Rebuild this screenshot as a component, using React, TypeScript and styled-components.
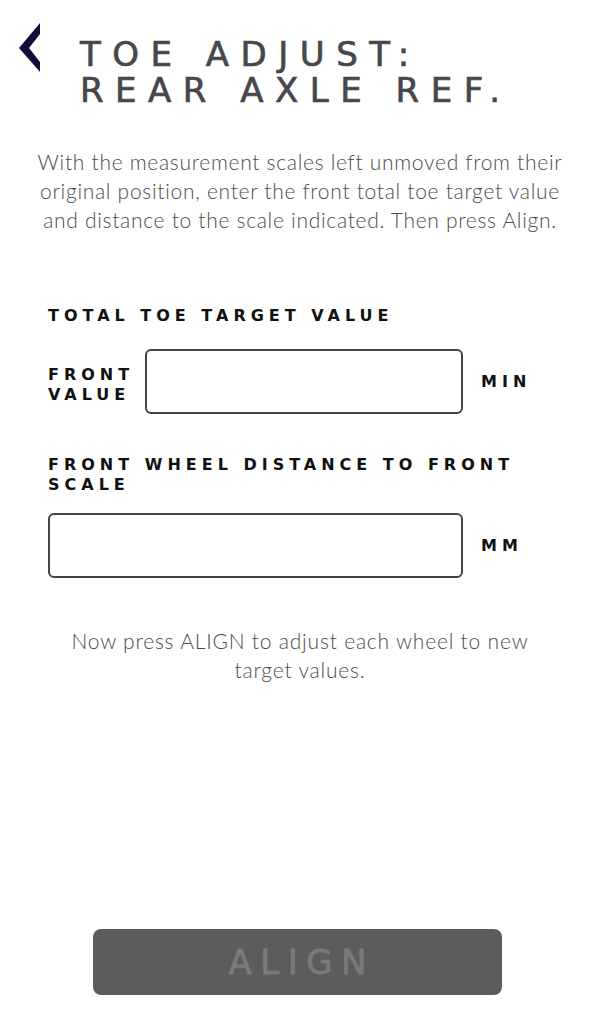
import React, { useState } from "react";
import styled, { createGlobalStyle } from "styled-components";

const GlobalStyle = createGlobalStyle`
    html, body {
        margin: 0;
        padding: 0;
        background: #ffffff;
    }
    * {
        box-sizing: border-box;
    }
`;

const App: React.FC = () => {
    const [toeValue, setToeValue] = useState("");
    const [distance, setDistance] = useState("");

    return (
        <Page>
            <GlobalStyle />
            <Header>
                <BackButton aria-label="Back">
                    <svg width="22" height="50" viewBox="0 0 22 50">
                        <polygon points="21,0 0,25 21,49 21,39 10,25 21,11" fill="#130c3c" />
                    </svg>
                </BackButton>
                <Title>
                    Toe adjust:
                    <br />
                    Rear axle ref.
                </Title>
            </Header>

            <Intro>
                With the measurement scales left unmoved from their original position, enter the front
                total toe target value and distance to the scale indicated. Then press Align.
            </Intro>

            <Form>
                <SectionLabel $gap={23}>Total toe target value</SectionLabel>
                <FieldRow>
                    <FieldLabel>
                        Front
                        <br />
                        value
                    </FieldLabel>
                    <Input
                        type="text"
                        value={toeValue}
                        onChange={(e: React.ChangeEvent<HTMLInputElement>) => setToeValue(e.target.value)}
                    />
                    <Unit>min</Unit>
                </FieldRow>

                <SectionLabel $top={41} $gap={18}>
                    Front wheel distance to front scale
                </SectionLabel>
                <FieldRow>
                    <Input
                        type="text"
                        value={distance}
                        onChange={(e: React.ChangeEvent<HTMLInputElement>) => setDistance(e.target.value)}
                    />
                    <Unit>mm</Unit>
                </FieldRow>
            </Form>

            <Note>Now press ALIGN to adjust each wheel to new target values.</Note>

            <AlignButton disabled>Align</AlignButton>
        </Page>
    );
};

const Page = styled.div`
    min-height: 100vh;
    display: flex;
    flex-direction: column;
    padding-bottom: 29px;
`;

const Header = styled.div`
    display: flex;
    align-items: flex-start;
    padding: 23px 0 0 19px;
`;

const BackButton = styled.button`
    border: none;
    background: none;
    padding: 0;
    width: 22px;
    height: 50px;
    cursor: pointer;
    svg {
        display: block;
    }
`;

const Title = styled.h1`
    margin: 13px 0 0 39px;
    font-family: "DejaVu Sans", sans-serif;
    font-weight: 400;
    font-size: 34px;
    line-height: 36px;
    letter-spacing: 11.5px;
    text-transform: uppercase;
    color: #46464b;
    -webkit-text-stroke: 0.7px #46464b;
`;

const Intro = styled.p`
    margin: 39px 0 0;
    padding: 0 30px;
    font-family: "Lato", sans-serif;
    font-weight: 300;
    font-size: 21px;
    line-height: 29px;
    letter-spacing: 0.7px;
    text-align: center;
    color: #4c4c4c;
`;

const Form = styled.div`
    margin-top: 72px;
    padding: 0 48px;
`;

const labelText = `
    font-family: "DejaVu Sans", sans-serif;
    font-weight: 700;
    font-size: 16px;
    line-height: 20px;
    letter-spacing: 5px;
    text-transform: uppercase;
    color: #111111;
`;

const SectionLabel = styled.div<{ $top?: number; $gap: number }>`
    ${labelText}
    margin-top: ${(p) => p.$top ?? 0}px;
    margin-bottom: ${(p) => p.$gap}px;
`;

const FieldRow = styled.div`
    display: flex;
    align-items: center;
`;

const FieldLabel = styled.div`
    ${labelText}
    width: 97px;
    margin-top: 7px;
`;

const Input = styled.input`
    flex: 1;
    min-width: 0;
    height: 65px;
    border: 2.5px solid #444448;
    border-radius: 6px;
    padding: 0 14px;
    font-family: "Lato", sans-serif;
    font-size: 20px;
    color: #333;
    outline: none;
`;

const Unit = styled.div`
    ${labelText}
    width: 89px;
    padding-left: 18px;
`;

const Note = styled.p`
    margin: 48px 0 0;
    padding: 0 60px;
    font-family: "Lato", sans-serif;
    font-weight: 300;
    font-size: 21px;
    line-height: 29px;
    letter-spacing: 0.8px;
    text-align: center;
    color: #4c4c4c;
`;

const AlignButton = styled.button`
    margin: auto 0 0 93px;
    width: 409px;
    height: 66px;
    border: none;
    border-radius: 8px;
    background: #5c5c5c;
    font-family: "DejaVu Sans", sans-serif;
    font-weight: 400;
    font-size: 34px;
    letter-spacing: 8.5px;
    text-indent: 8.5px;
    text-transform: uppercase;
    color: #7a7a7a;
    -webkit-text-stroke: 0.8px #7a7a7a;
`;

export default App;
